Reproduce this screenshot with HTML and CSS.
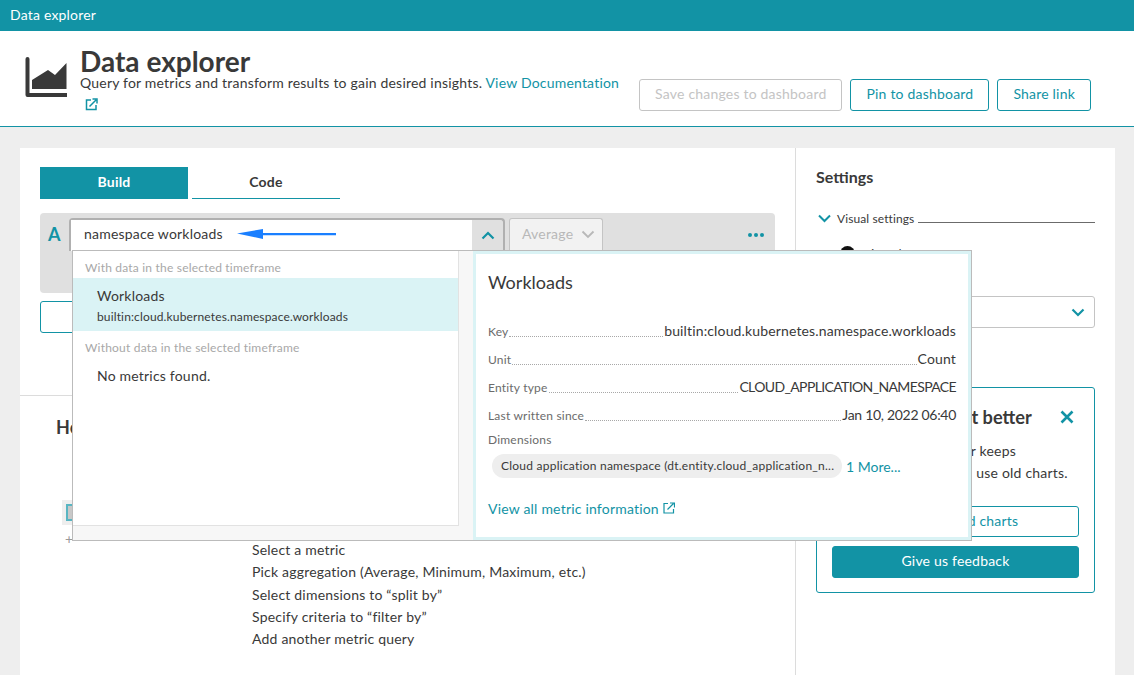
FILE: index.html
```html
<!DOCTYPE html>
<html lang="en">
<head>
  <meta charset="UTF-8" />
  <meta name="viewport" content="width=device-width, initial-scale=1.0" />
  <title>Data explorer</title>
  <link rel="stylesheet" href="styles.css">
</head>
<body>
  <div class="topbar">Data explorer</div>

  <header class="page-header">
    <svg class="page-icon" width="42" height="41" viewBox="0 0 42 41">
      <path d="M2.500 2v36h39" fill="none" stroke="#393939" stroke-width="4" stroke-linecap="round" stroke-linejoin="round"/>
      <path d="M7 23 23 13l7 5L41.500 6v26H7z" fill="#393939"/>
    </svg>
    <div class="page-title">
      <h1>Data explorer</h1>
      <p>Query for metrics and transform results to gain desired insights. <a href="#">View Documentation</a></p>
      <svg class="ext-icon" width="13" height="13" viewBox="0 0 13 13">
        <path d="M6 2H1.500v9.500H11V7" fill="none" stroke="#1293a5" stroke-width="1.500"/>
        <path d="M4.500 8.500 11 2M7.500 1H12v4.500" fill="none" stroke="#1293a5" stroke-width="1.500"/>
      </svg>
    </div>
    <div class="header-actions">
      <button class="btn btn-disabled">Save changes to dashboard</button>
      <button class="btn">Pin to dashboard</button>
      <button class="btn">Share link</button>
    </div>
  </header>

  <main class="card">
    <section class="builder">
      <div class="builder-top">
        <div class="tabs">
          <div class="tab active">Build</div>
          <div class="tab">Code</div>
        </div>
        <div class="query">
          <span class="query-letter">A</span>
          <div class="metric-field">
            <div class="metric-input">namespace workloads</div>
            <div class="metric-toggle">
              <svg width="14" height="9" viewBox="0 0 14 9"><path d="M1.500 7.500 7 2l5.500 5.500" fill="none" stroke="#1293a5" stroke-width="2.200"/></svg>
            </div>
          </div>
          <div class="aggregation">
            <span>Average</span>
            <svg width="14" height="9" viewBox="0 0 14 9"><path d="M1.500 1.500 7 7l5.500-5.500" fill="none" stroke="#b8b8b8" stroke-width="1.800"/></svg>
          </div>
          <div class="dots"><i></i><i></i><i></i></div>
        </div>
        <button class="btn add-query">Add metric query</button>
      </div>

      <div class="help">
        <h2>How to build a query</h2>
        <div class="help-body">
          <div class="help-preview">
            <div class="preview-box"><span></span></div>
            <div class="preview-plus">+</div>
          </div>
          <ul class="help-list">
            <li>Select a metric</li>
            <li>Pick aggregation (Average, Minimum, Maximum, etc.)</li>
            <li>Select dimensions to “split by”</li>
            <li>Specify criteria to “filter by”</li>
            <li>Add another metric query</li>
          </ul>
        </div>
      </div>
    </section>

    <aside class="settings">
      <h3>Settings</h3>
      <div class="settings-group">
        <svg width="13" height="9" viewBox="0 0 13 9"><path d="M1 1.500 6.500 7 12 1.500" fill="none" stroke="#1293a5" stroke-width="2"/></svg>
        <span>Visual settings</span>
        <div class="group-line"></div>
      </div>
      <div class="chart-type"><i class="chart-dot"></i>Pinned</div>
      <div class="select">
        <svg width="14" height="9" viewBox="0 0 14 9"><path d="M1.500 1.500 7 7l5.500-5.500" fill="none" stroke="#1293a5" stroke-width="2.200"/></svg>
      </div>
      <div class="feedback">
        <div class="feedback-head">
          <h4>Help us to make it better</h4>
          <svg width="14" height="14" viewBox="0 0 14 14"><path d="M1.500 1.500l11 11M12.500 1.500l-11 11" stroke="#1293a5" stroke-width="2.600"/></svg>
        </div>
        <p>The new Data explorer keeps<br>improved. You will still use old charts.</p>
        <button class="btn feedback-btn">Switch to old charts</button>
        <button class="btn btn-solid feedback-btn">Give us feedback</button>
      </div>
    </aside>
  </main>

  <div class="metric-menu">
    <div class="menu-list">
      <div class="menu-items">
        <div class="menu-label">With data in the selected timeframe</div>
        <div class="menu-item selected">
          <div class="item-name">Workloads</div>
          <div class="item-key">builtin:cloud.kubernetes.namespace.workloads</div>
        </div>
        <div class="menu-label second">Without data in the selected timeframe</div>
        <div class="menu-empty">No metrics found.</div>
      </div>
    </div>
    <div class="metric-info">
      <h5>Workloads</h5>
      <dl class="info-rows">
        <div><dt>Key</dt><dd>builtin:cloud.kubernetes.namespace.workloads</dd></div>
        <div><dt>Unit</dt><dd>Count</dd></div>
        <div><dt>Entity type</dt><dd class="caps">CLOUD_APPLICATION_NAMESPACE</dd></div>
        <div><dt>Last written since</dt><dd class="date">Jan 10, 2022 06:40</dd></div>
      </dl>
      <div class="dim-label">Dimensions</div>
      <div class="dim-row">
        <span class="chip">Cloud application namespace (dt.entity.cloud_application_n...</span>
        <a href="#">1 More...</a>
      </div>
      <a class="info-link" href="#">View all metric information
        <svg width="12" height="12" viewBox="0 0 12 12">
          <path d="M5 1.500H1v9.500h9.500V7" fill="none" stroke="#1293a5" stroke-width="1.200"/>
          <path d="M4.500 7.500 10.500 1.500M7 1h4.500v4.500" fill="none" stroke="#1293a5" stroke-width="1.200"/>
        </svg>
      </a>
    </div>
  </div>

  <svg class="arrow" width="100" height="10" viewBox="0 0 100 10">
    <path d="M26 4h73v2.200H26z" fill="#1a7fff"/>
    <path d="M0 4.500 26 0v10z" fill="#1a7fff"/>
  </svg>
</body>
</html>
```

FILE: styles.css
```css
* {
  box-sizing: border-box;
}

html, body {
  height: 675px;
  overflow: hidden;
}

body {
  margin: 0;
  position: relative;
  font-family: Lato, "Open Sans", sans-serif;
  font-size: 14px;
  letter-spacing: 0.2px;
  color: #393939;
  background-color: #eeeeee;
}

a {
  color: #1293a5;
  text-decoration: none;
}

.topbar {
  height: 31px;
  padding: 0 10px;
  line-height: 30px;
  color: white;
  background-color: #1293a5;
}

.page-header {
  display: flex;
  height: 96px;
  padding: 26px 43px 0 25px;
  background-color: white;
  border-bottom: 1px solid #1293a5;
}

.page-icon {
  flex: none;
  margin-right: 13px;
}

.page-title {
  width: 545px;
  margin-top: -10px;
}

.page-title h1 {
  margin: 0;
  font-size: 28px;
  line-height: 28px;
  font-weight: 700;
  letter-spacing: 0;
}

.page-title p {
  margin: -2px 0 0;
  line-height: 20px;
  white-space: nowrap;
}

.ext-icon {
  display: block;
  margin: 5px 0 0 5px;
}

.header-actions {
  display: flex;
  gap: 8px;
  margin-top: 22px;
  margin-left: auto;
}

.btn {
  height: 32px;
  padding: 0 15px 3px;
  font: inherit;
  letter-spacing: inherit;
  color: #1293a5;
  background: white;
  border: 1px solid #1293a5;
  border-radius: 3px;
}

.btn-disabled {
  color: #c4c4c4;
  border-color: #c4c4c4;
}

.btn-solid {
  color: white;
  background-color: #1293a5;
}

.card {
  display: flex;
  width: 1095px;
  height: 527px;
  margin: 21px 0 0 20px;
  background-color: white;
}

.builder {
  width: 776px;
  border-right: 1px solid #dcdcdc;
}

.builder-top {
  height: 248px;
  padding: 19px 20px 0;
  border-bottom: 1px solid #dcdcdc;
}

.tabs {
  display: flex;
  gap: 4px;
}

.tab {
  width: 148px;
  height: 32px;
  line-height: 30px;
  text-align: center;
  font-weight: 700;
  border-bottom: 1px solid #1293a5;
}

.tab.active {
  color: white;
  background-color: #1293a5;
}

.query {
  display: flex;
  align-items: flex-start;
  height: 80px;
  margin-top: 14px;
  padding: 5px 11px 0 8px;
  background-color: #e0e0e0;
  border-radius: 4px;
}

.query-letter {
  width: 21px;
  margin-top: 5px;
  font-size: 18px;
  font-weight: 700;
  color: #1293a5;
}

.metric-field {
  display: flex;
  width: 436px;
  height: 33px;
  border: 2px solid #b0b0b0;
  border-bottom: 0;
  border-radius: 4px 4px 0 0;
}

.metric-input {
  width: 401px;
  padding: 0 13px;
  line-height: 28px;
  background-color: white;
}

.metric-toggle {
  display: flex;
  flex: 1;
  align-items: center;
  justify-content: center;
}

.aggregation {
  display: flex;
  align-items: center;
  gap: 8px;
  width: 94px;
  height: 32px;
  margin-left: 4px;
  padding-left: 12px;
  color: #b8b8b8;
  background-color: #f2f2f2;
  border: 1px solid #c4c4c4;
  border-bottom: 0;
  border-radius: 3px 3px 0 0;
}

.aggregation span {
  margin-bottom: 2px;
}

.dots {
  display: flex;
  gap: 2px;
  margin: 15px 0 0 auto;
}

.dots i {
  width: 4px;
  height: 4px;
  background-color: #1293a5;
  border-radius: 50%;
}

.add-query {
  display: block;
  width: 300px;
  margin-top: 8px;
}

.help {
  padding: 19px 36px;
}

.help h2 {
  margin: 0;
  font-size: 18px;
  line-height: 24px;
}

.help-body {
  display: flex;
}

.help-preview {
  flex: none;
  width: 190px;
  margin: 61px 0 0 6px;
}

.preview-box {
  width: 140px;
  height: 25px;
  padding: 4px;
  background-color: #eeeeee;
}

.preview-box span {
  display: block;
  width: 40px;
  height: 17px;
  background-color: #c8c8c8;
  border: 2px solid #58b5c2;
}

.preview-plus {
  margin-top: 5px;
  padding-left: 3px;
  color: #999999;
}

.help-list {
  margin: 100px 0 0;
  padding: 0;
  list-style: none;
  line-height: 22.300px;
}

.settings {
  flex: 1;
  padding: 19px 20px 0;
}

.settings h3 {
  margin: 0;
  font-size: 16px;
  line-height: 20px;
  letter-spacing: 0;
}

.settings-group {
  display: flex;
  align-items: center;
  gap: 6px;
  margin-top: 24px;
  padding-left: 2px;
  font-size: 12px;
  letter-spacing: 0.1px;
}

.group-line {
  flex: 1;
  height: 1px;
  margin-top: 8px;
  margin-left: -2px;
  background-color: #6b6b6b;
}

.chart-type {
  display: flex;
  gap: 9px;
  margin: 20px 0 0 24px;
  font-size: 12px;
}

.chart-dot {
  width: 15px;
  height: 15px;
  background-color: #111111;
  border-radius: 50%;
}

.select {
  display: flex;
  align-items: center;
  justify-content: flex-end;
  height: 32px;
  margin-top: 35px;
  padding-right: 9px;
  border: 1px solid #c4c4c4;
  border-radius: 3px;
}

.feedback {
  height: 206px;
  margin-top: 59px;
  padding: 17px 15px;
  border: 1px solid #1293a5;
  border-radius: 3px;
}

.feedback-head {
  display: flex;
  align-items: center;
  justify-content: space-between;
  padding-right: 5px;
}

.feedback-head h4 {
  margin: 0;
  font-size: 18.200px;
  line-height: 24px;
  letter-spacing: 0;
  white-space: nowrap;
}

.feedback p {
  margin: 11px 0 0;
  line-height: 22px;
  white-space: nowrap;
}

.feedback-btn {
  display: block;
  width: 100%;
  margin-top: 9px;
}

.feedback p + .feedback-btn {
  margin-top: 22px;
  height: 31px;
}

.metric-menu {
  position: absolute;
  top: 250px;
  left: 72px;
  display: flex;
  width: 900px;
  height: 291px;
  background-color: #f7f7f7;
  border: 1px solid #bbbbbb;
}

.menu-list {
  flex: none;
  width: 400px;
}

.menu-items {
  width: 386px;
  height: 275px;
  background-color: white;
  border-right: 1px solid #e2e2e2;
  border-bottom: 1px solid #e2e2e2;
}

.menu-label {
  height: 27px;
  padding: 8px 12px 0;
  font-size: 12px;
  line-height: 18px;
  color: #a8a8a8;
}

.menu-label.second {
  height: auto;
  padding-top: 8px;
}

.menu-item {
  height: 53px;
  padding: 9px 24px 0;
}

.menu-item.selected {
  background-color: #daf3f5;
}

.item-name {
  line-height: 18px;
}

.item-key {
  margin-top: 4px;
  font-size: 12px;
  line-height: 16px;
  letter-spacing: 0.14px;
}

.menu-empty {
  padding: 10px 24px 0;
}

.metric-info {
  flex: 1;
  padding: 17px 12px 0;
  background-color: white;
  border: 3px solid #daf3f5;
}

.metric-info h5 {
  margin: 0;
  font-size: 18px;
  font-weight: 400;
  line-height: 22px;
  letter-spacing: 0;
}

.info-rows {
  margin: 29px 0 0;
}

.info-rows div {
  display: flex;
  align-items: baseline;
  height: 28px;
}

.info-rows dt {
  flex: 1;
  display: flex;
  font-size: 12px;
  color: #6b6b6b;
  white-space: nowrap;
}

.info-rows dt::after {
  content: "";
  flex: 1;
  margin: 0 1px 2px;
  border-bottom: 1px dotted #a8a8a8;
}

.info-rows dd {
  margin: 0;
  letter-spacing: 0.14px;
}

.info-rows dd.caps {
  letter-spacing: -0.63px;
}

.info-rows dd.date {
  letter-spacing: -0.3px;
}

.dim-label {
  margin-top: -3px;
  font-size: 12px;
  line-height: 18px;
  color: #6b6b6b;
}

.dim-row {
  display: flex;
  align-items: center;
  gap: 4px;
  margin: 5px 0 0 4px;
  letter-spacing: 0;
}

.chip {
  flex: none;
  width: 350px;
  height: 24px;
  padding: 0 9px;
  font-size: 12px;
  line-height: 23px;
  letter-spacing: 0.24px;
  white-space: nowrap;
  overflow: hidden;
  background-color: #eeeeee;
  border-radius: 12px;
}

.info-link {
  display: block;
  margin-top: 22px;
}

.arrow {
  position: absolute;
  top: 229px;
  left: 237px;
}
```
